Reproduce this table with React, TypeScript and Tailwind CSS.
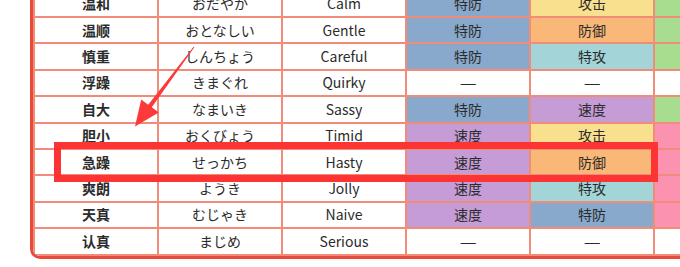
const C = {
  blue: 'bg-[#88a8cc]',
  yellow: 'bg-[#f9e08f]',
  orange: 'bg-[#f9b878]',
  teal: 'bg-[#a3d4d8]',
  purple: 'bg-[#c59cd6]',
  green: 'bg-[#a8dc8e]',
  pink: 'bg-[#fa92b0]',
  white: 'bg-white',
};

type Stat = { label: string; color: string };

const stat: Record<string, Stat> = {
  atk: { label: '攻击', color: C.yellow },
  def: { label: '防御', color: C.orange },
  spa: { label: '特攻', color: C.teal },
  spd: { label: '特防', color: C.blue },
  spe: { label: '速度', color: C.purple },
  none: { label: '—', color: C.white },
};

const rows: { zh: string; ja: string; en: string; up: Stat; down: Stat; extra: string }[] = [
  { zh: '温和', ja: 'おだやか', en: 'Calm', up: stat.spd, down: stat.atk, extra: C.green },
  { zh: '温顺', ja: 'おとなしい', en: 'Gentle', up: stat.spd, down: stat.def, extra: C.green },
  { zh: '慎重', ja: 'しんちょう', en: 'Careful', up: stat.spd, down: stat.spa, extra: C.green },
  { zh: '浮躁', ja: 'きまぐれ', en: 'Quirky', up: stat.none, down: stat.none, extra: C.white },
  { zh: '自大', ja: 'なまいき', en: 'Sassy', up: stat.spd, down: stat.spe, extra: C.green },
  { zh: '胆小', ja: 'おくびょう', en: 'Timid', up: stat.spe, down: stat.atk, extra: C.pink },
  { zh: '急躁', ja: 'せっかち', en: 'Hasty', up: stat.spe, down: stat.def, extra: C.pink },
  { zh: '爽朗', ja: 'ようき', en: 'Jolly', up: stat.spe, down: stat.spa, extra: C.pink },
  { zh: '天真', ja: 'むじゃき', en: 'Naive', up: stat.spe, down: stat.spd, extra: C.pink },
  { zh: '认真', ja: 'まじめ', en: 'Serious', up: stat.none, down: stat.none, extra: C.white },
];

const cell = 'flex items-center justify-center text-[14px] text-[#2b2b2b]';

function StatCell({ s }: { s: Stat }) {
  return (
    <div className={`${cell} ${s.color}`}>
      {s.label === '—' ? <span className="inline-block scale-x-[1.35]">—</span> : s.label}
    </div>
  );
}

export default function App() {
  return (
    <div
      className="relative w-[680px] h-[267px] overflow-hidden bg-white pl-[30px]"
      style={{ fontFamily: '"Noto Sans CJK SC", "Noto Sans", sans-serif' }}
    >
      {/* Table */}
      <div className="mt-[-13.4px] w-[780px] border-[3px] border-[#e84a3c] rounded-[10px] overflow-hidden">
        <div className="grid grid-cols-[repeat(6,122px)] auto-rows-[24.4px] gap-[2px] p-[2px] bg-[#f08c78]">
          {rows.map((r) => (
            <div key={r.zh} className="contents">
              <div className={`${cell} bg-white font-bold`}>{r.zh}</div>
              <div className={`${cell} bg-white`}>{r.ja}</div>
              <div className={`${cell} bg-white`}>{r.en}</div>
              <StatCell s={r.up} />
              <StatCell s={r.down} />
              <div className={`${cell} ${r.extra}`} />
            </div>
          ))}
        </div>
      </div>

      {/* Highlight box */}
      <div className="absolute left-[54px] top-[142px] w-[604px] h-[40px] border-[7px] border-[#fc3434]" />

      {/* Arrow */}
      <svg className="absolute left-0 top-0" width="680" height="267" viewBox="0 0 680 267">
        <polygon
          fill="#fc3a3a"
          points="193.6,46.7 194.4,47.3 151.8,107.3 158.8,112.6 135,126.5 141.2,99.4 148.2,104.7"
        />
      </svg>
    </div>
  );
}
